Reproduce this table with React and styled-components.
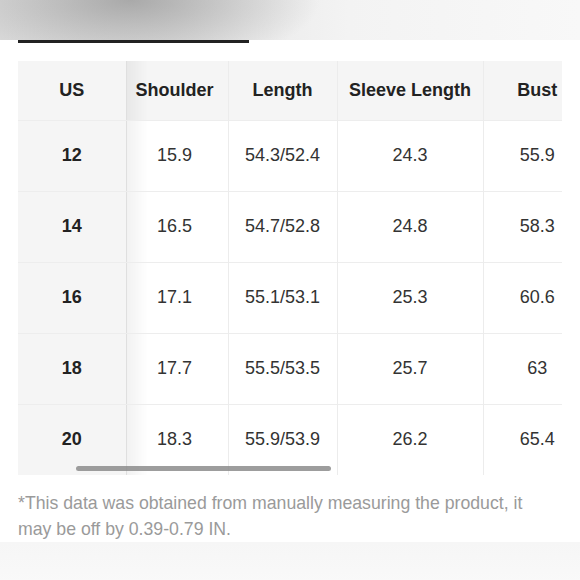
import React from 'react';
import styled, { createGlobalStyle } from 'styled-components';

const GlobalStyle = createGlobalStyle`
  html, body {
    margin: 0;
    padding: 0;
    background: #fff;
  }
  body {
    font-family: "Liberation Sans", Arial, Helvetica, sans-serif;
  }
`;

const Page = styled.div`
  width: 580px;
  height: 580px;
  display: flex;
  flex-direction: column;
  overflow: hidden;
  background: #fff;
`;

const TopBand = styled.div`
  height: 40px;
  flex-shrink: 0;
  background:
    radial-gradient(ellipse 190px 70px at 130px 0px, rgba(150, 150, 150, 0.75), rgba(150, 150, 150, 0) 100%),
    linear-gradient(90deg, #dedede 0%, #e4e4e4 30%, #f3f3f3 60%, #f8f8f8 100%);
`;

const TabBar = styled.div`
  padding: 0 18px;
  height: 3px;
  flex-shrink: 0;

  .indicator {
    width: 231px;
    height: 3px;
    background: #222;
  }
`;

const TableWrap = styled.div`
  position: relative;
  margin: 18px 18px 0;
  height: 414px;
  overflow: hidden;
  flex-shrink: 0;
`;

const Table = styled.table`
  border-collapse: collapse;
  table-layout: fixed;
  width: 573px;
`;

const Cell = styled.td`
  width: ${(props) => props.$w}px;
  height: ${(props) => (props.$head ? 59 : 71)}px;
  padding: 0 ${(props) => props.$pr || 0}px 0 0;
  text-align: center;
  font-size: 18px;
  font-weight: ${(props) => (props.$bold ? 700 : 400)};
  color: ${(props) => (props.$bold ? '#222' : '#333')};
  background: ${(props) => (props.$head || props.$sticky ? '#f5f5f5' : '#fff')};
  border-left: 1px solid #ececec;
  border-top: 1px solid #ededed;
  box-sizing: border-box;
  white-space: nowrap;

  &:first-child {
    border-left: none;
  }

  ${(props) =>
    props.$sticky &&
    `
    position: sticky;
    left: 0;
    z-index: 1;
    &::after {
      content: '';
      position: absolute;
      top: 0;
      bottom: 0;
      right: -22px;
      width: 22px;
      background: linear-gradient(90deg, rgba(0, 0, 0, 0.055), rgba(0, 0, 0, 0));
      pointer-events: none;
    }
  `}
`;

const Row = styled.tr`
  &:first-child td {
    border-top: none;
  }
`;

const ScrollThumb = styled.div`
  position: absolute;
  left: 58px;
  bottom: 4px;
  width: 255px;
  height: 5px;
  border-radius: 3px;
  background: rgba(140, 140, 140, 0.85);
  z-index: 2;
`;

const Note = styled.p`
  margin: 15px 18px 0;
  max-width: 525px;
  font-size: 17.7px;
  line-height: 26px;
  color: #9a9a9a;
`;

const BottomBand = styled.div`
  margin-top: auto;
  height: 42px;
  flex-shrink: 0;
  background: linear-gradient(180deg, #f6f6f6, #f9f9f9);
`;

const columns = [
  { key: 'us', label: 'US', w: 108 },
  { key: 'shoulder', label: 'Shoulder', w: 102, pr: 5 },
  { key: 'length', label: 'Length', w: 109 },
  { key: 'sleeve', label: 'Sleeve Length', w: 146 },
  { key: 'bust', label: 'Bust', w: 108 },
];

const rows = [
  ['12', '15.9', '54.3/52.4', '24.3', '55.9'],
  ['14', '16.5', '54.7/52.8', '24.8', '58.3'],
  ['16', '17.1', '55.1/53.1', '25.3', '60.6'],
  ['18', '17.7', '55.5/53.5', '25.7', '63'],
  ['20', '18.3', '55.9/53.9', '26.2', '65.4'],
];

const App = () => (
  <>
    <GlobalStyle />
    <Page>
      <TopBand />
      <TabBar>
        <div className="indicator" />
      </TabBar>
      <TableWrap>
        <Table>
          <tbody>
            <Row>
              {columns.map((col, i) => (
                <Cell key={col.key} $w={col.w} $pr={col.pr} $head $bold $sticky={i === 0}>
                  {col.label}
                </Cell>
              ))}
            </Row>
            {rows.map((row) => (
              <Row key={row[0]}>
                {row.map((val, i) => (
                  <Cell
                    key={columns[i].key}
                    $w={columns[i].w}
                    $pr={columns[i].pr}
                    $bold={i === 0}
                    $sticky={i === 0}
                  >
                    {val}
                  </Cell>
                ))}
              </Row>
            ))}
          </tbody>
        </Table>
        <ScrollThumb />
      </TableWrap>
      <Note>
        *This data was obtained from manually measuring the product, it may be off by 0.39-0.79 IN.
      </Note>
      <BottomBand />
    </Page>
  </>
);

export default App;
